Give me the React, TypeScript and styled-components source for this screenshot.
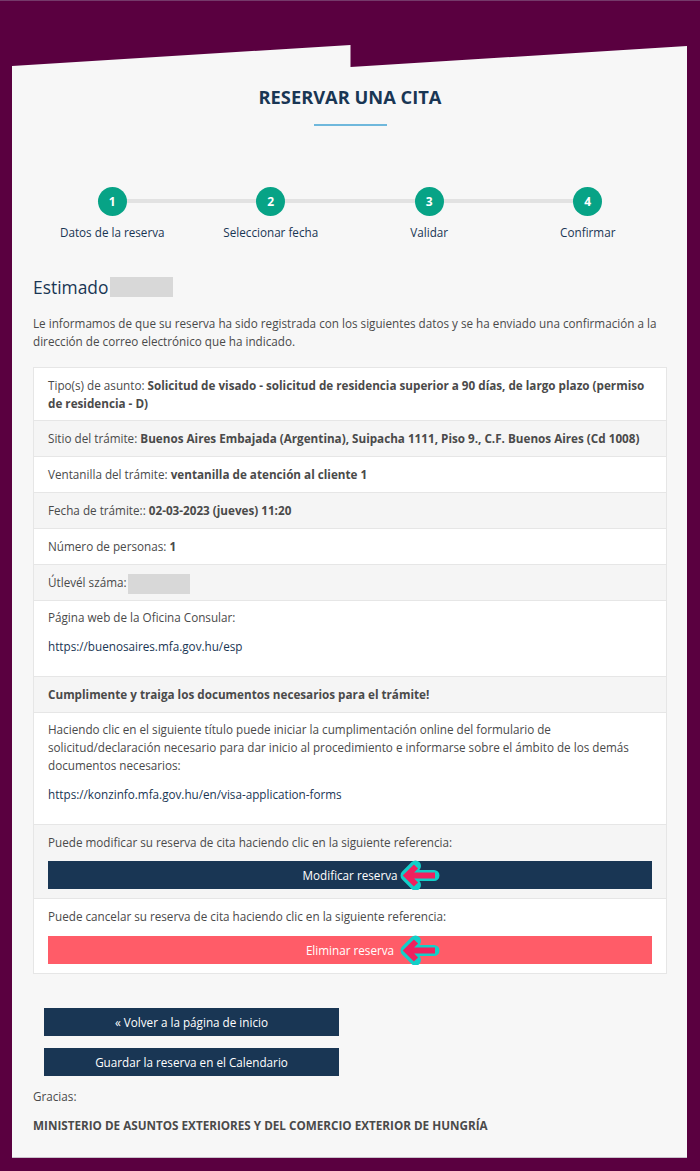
import styled, { createGlobalStyle } from "styled-components";

const GlobalStyle = createGlobalStyle`
  html, body {
    margin: 0;
    padding: 0;
    background: #5a0040;
  }
  body {
    font-family: "Open Sans", "Liberation Sans", sans-serif;
    font-size: 11.7px;
    line-height: 18px;
    color: #4a4a4a;
  }
  * { box-sizing: border-box; }
`;

const navy = "#193654";

const steps = ["Datos de la reserva", "Seleccionar fecha", "Validar", "Confirmar"];

const Page = styled.div`
  width: 700px;
  height: 1171px;
  padding: 45px 13px 13px 12px;
  border-top: 1px solid #75396a;
`;

const Card = styled.main`
  height: 1113px;
  margin-top: -1px;
  background: #f7f7f7;
  padding: 40px 20px 0 21px;
  clip-path: polygon(0 21px, 338.5px 0, 338.5px 22px, 100% 1px, 100% 100%, 0 100%);
  border-bottom: 1px solid #c9c3cb;
`;

const Title = styled.h1`
  margin: 0;
  text-align: center;
  font-size: 18.3px;
  line-height: 24px;
  font-weight: 700;
  color: ${navy};
`;

const TitleRule = styled.div`
  width: 73px;
  height: 2px;
  margin: 15px auto 0;
  background: #6fb8dc;
`;

const Stepper = styled.ol`
  display: grid;
  grid-template-columns: repeat(4, 158.5px);
  margin: 61px 0 0;
  padding: 0;
  list-style: none;
`;

const StepItem = styled.li<{ $last: boolean }>`
  position: relative;
  display: flex;
  flex-direction: column;
  align-items: center;
  gap: 7px;
  color: ${navy};

  &::before {
    content: "";
    display: ${(p) => (p.$last ? "none" : "block")};
    position: absolute;
    top: 12px;
    left: 50%;
    width: 100%;
    height: 4px;
    background: #e2e2e2;
  }
`;

const StepDot = styled.span`
  position: relative;
  width: 29px;
  height: 29px;
  border-radius: 50%;
  background: #07a386;
  color: #fff;
  font-weight: 700;
  font-size: 12px;
  line-height: 29px;
  text-align: center;
`;

const Greeting = styled.h2`
  display: flex;
  align-items: center;
  margin: 34px 0 0;
  font-size: 17.4px;
  line-height: 24px;
  font-weight: 400;
  color: ${navy};
`;

const Redacted = styled.span<{ $width: number }>`
  display: inline-block;
  width: ${(p) => p.$width}px;
  height: 20px;
  margin-left: 2px;
  background: #d8d8d8;
`;

const Intro = styled.p`
  margin: 15px 0 0;
  color: #4a4a4a;
`;

const List = styled.section`
  margin-top: 17px;
  border: 1px solid #e6e6e6;
  border-bottom: 0;
`;

const Row = styled.div<{ $shaded?: boolean; $height: number }>`
  height: ${(p) => p.$height}px;
  padding: 8px 14px 0;
  background: ${(p) => (p.$shaded ? "#f5f5f5" : "#fff")};
  border-bottom: 1px solid #e6e6e6;
`;

const RowRedacted = styled(Redacted)`
  vertical-align: middle;
  margin-left: 1px;
`;

const Para = styled.p`
  margin: -1px 0 11px;
`;

const Link = styled.a`
  color: ${navy};
  text-decoration: none;
`;

const ActionButton = styled.a<{ $danger?: boolean }>`
  position: relative;
  display: block;
  height: 28px;
  margin-top: ${(p) => (p.$danger ? 11 : 10)}px;
  background: ${(p) => (p.$danger ? "#ff5c68" : navy)};
  color: #fff;
  text-align: center;
  line-height: 28px;
`;

const ArrowMark = styled.svg`
  position: absolute;
  left: 352px;
  top: -1px;
  width: 40px;
  height: 30px;
`;

const BackActions = styled.div`
  display: flex;
  flex-direction: column;
  gap: 12px;
  margin: 34px 0 0 11px;
`;

const NavButton = styled.a`
  display: block;
  width: 295px;
  height: 28px;
  background: ${navy};
  color: #fff;
  text-align: center;
  line-height: 28px;
`;

const Thanks = styled.p`
  margin: 11px 0 0;
`;

const Ministry = styled.p`
  margin: 11px 0 0;
  font-weight: 700;
`;

const Arrow = () => (
  <ArrowMark viewBox="0 0 40 30" aria-hidden="true">
    <path
      d="M34 15.5 H6 M15.5 6 L6 15.5 L15.5 25"
      fill="none"
      stroke="#12cfc8"
      strokeWidth="11"
      strokeLinejoin="round"
      strokeLinecap="round"
    />
    <path
      d="M35 15.5 H8 M16 6.5 L7 15.5 L16 24.5"
      fill="none"
      stroke="#f0215e"
      strokeWidth="6"
      strokeLinejoin="miter"
    />
  </ArrowMark>
);

export const App = () => {
  return (
    <Page>
      <GlobalStyle />
      <Card>
        <Title>RESERVAR UNA CITA</Title>
        <TitleRule />

        <Stepper>
          {steps.map((step, index) => (
            <StepItem key={step} $last={index === steps.length - 1}>
              <StepDot>{index + 1}</StepDot>
              {step}
            </StepItem>
          ))}
        </Stepper>

        <Greeting>
          Estimado
          <Redacted $width={63} />
        </Greeting>

        <Intro>
          Le informamos de que su reserva ha sido registrada con los siguientes datos y se ha enviado una
          confirmación a la dirección de correo electrónico que ha indicado.
        </Intro>

        <List>
          <Row $height={53}>
            Tipo(s) de asunto:{" "}
            <b>
              Solicitud de visado - solicitud de residencia superior a 90 días, de largo plazo (permiso de
              residencia - D)
            </b>
          </Row>
          <Row $shaded $height={36}>
            Sitio del trámite: <b>Buenos Aires Embajada (Argentina), Suipacha 1111, Piso 9., C.F. Buenos Aires (Cd 1008)</b>
          </Row>
          <Row $height={36}>
            Ventanilla del trámite: <b>ventanilla de atención al cliente 1</b>
          </Row>
          <Row $shaded $height={36}>
            Fecha de trámite:: <b>02-03-2023 (jueves) 11:20</b>
          </Row>
          <Row $height={36}>
            Número de personas: <b>1</b>
          </Row>
          <Row $shaded $height={36}>
            Útlevél száma:
            <RowRedacted $width={62} />
          </Row>
          <Row $height={76}>
            <Para>Página web de la Oficina Consular:</Para>
            <Link>https://buenosaires.mfa.gov.hu/esp</Link>
          </Row>
          <Row $shaded $height={36}>
            <b>Cumplimente y traiga los documentos necesarios para el trámite!</b>
          </Row>
          <Row $height={112}>
            <Para>
              Haciendo clic en el siguiente título puede iniciar la cumplimentación online del formulario de
              solicitud/declaración necesario para dar inicio al procedimiento e informarse sobre el ámbito de
              los demás documentos necesarios:
            </Para>
            <Link>https://konzinfo.mfa.gov.hu/en/visa-application-forms</Link>
          </Row>
          <Row $shaded $height={74}>
            Puede modificar su reserva de cita haciendo clic en la siguiente referencia:
            <ActionButton>
              Modificar reserva
              <Arrow />
            </ActionButton>
          </Row>
          <Row $height={75}>
            Puede cancelar su reserva de cita haciendo clic en la siguiente referencia:
            <ActionButton $danger>
              Eliminar reserva
              <Arrow />
            </ActionButton>
          </Row>
        </List>

        <BackActions>
          <NavButton>« Volver a la página de inicio</NavButton>
          <NavButton>Guardar la reserva en el Calendario</NavButton>
        </BackActions>

        <Thanks>Gracias:</Thanks>
        <Ministry>MINISTERIO DE ASUNTOS EXTERIORES Y DEL COMERCIO EXTERIOR DE HUNGRÍA</Ministry>
      </Card>
    </Page>
  );
};

export default App;
